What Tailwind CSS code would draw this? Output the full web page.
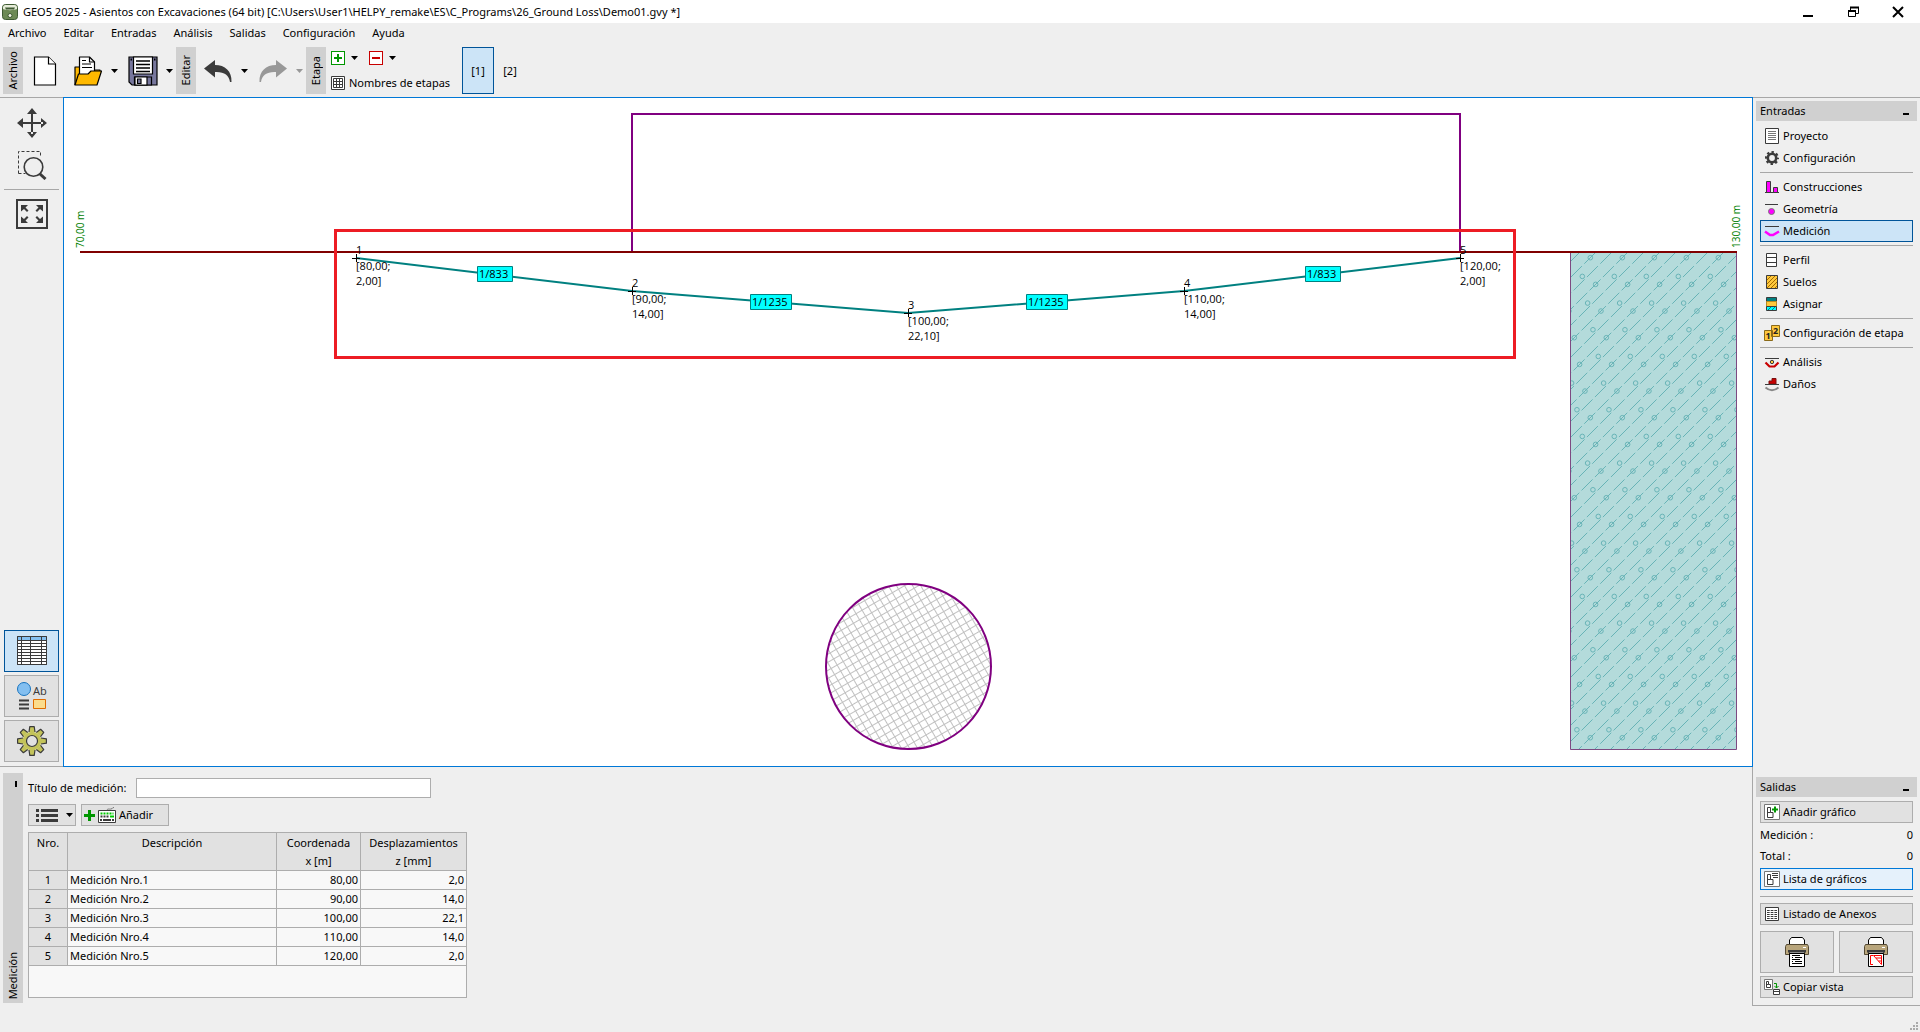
<!DOCTYPE html>
<html lang="es">
<head>
  <meta charset="UTF-8">
  <meta name="viewport" content="width=device-width, initial-scale=1.0">
  <title>GEO5 2025 - Asientos con Excavaciones</title>
  <!-- Tailwind CSS CDN -->
  <script src="https://cdn.jsdelivr.net/npm/@tailwindcss/browser@4"></script>
</head>
<body class="h-screen flex flex-col overflow-hidden bg-[#efefef] font-['Noto_Sans','Open_Sans',sans-serif] text-[11px] leading-4 text-black">

  <!-- Title bar -->
  <header class="flex h-[23px] shrink-0 items-center bg-white">
    <svg class="ml-0.5 mr-[5px] size-4" viewBox="0 0 16 16">
      <rect x="0.5" y="0.5" width="15" height="15" rx="3" fill="#6d8a55" stroke="#3f5a33"/>
      <path d="M1 3.500C1 2 2 1 3.500 1h9C14 1 15 2 15 3.500V5c-4 1.500-10 1.500-14 0z" fill="#e6ecd9"/>
      <path d="M3 3.500h10l-1 2H4z" fill="#3f5a33"/>
      <circle cx="8" cy="11.500" r="2" fill="#f4f7ea" stroke="#3f5a33"/>
    </svg>
    <h1 class="flex-1">GEO5 2025 - Asientos con Excavaciones (64 bit) [C:\Users\User1\HELPY_remake\ES\C_Programs\26_Ground Loss\Demo01.gvy *]</h1>
    <button class="flex h-full w-[45px] items-center justify-center" aria-label="Minimizar">
      <svg class="size-3" viewBox="0 0 12 12"><path d="M1 10h10" stroke="#000" stroke-width="2"/></svg>
    </button>
    <button class="flex h-full w-[45px] items-center justify-center" aria-label="Restaurar">
      <svg class="size-3" viewBox="0 0 12 12" fill="none" stroke="#000">
        <path d="M3.500 4V1.500h8v6H9"/><path d="M3 1.500h9M1 5h8" stroke-width="2"/><path d="M1.500 4.500h7v6h-7z"/>
      </svg>
    </button>
    <button class="flex h-full w-[45px] items-center justify-center" aria-label="Cerrar">
      <svg class="size-3" viewBox="0 0 12 12"><path d="M1 1l10 10M11 1L1 11" stroke="#000" stroke-width="2"/></svg>
    </button>
  </header>

  <!-- Menu -->
  <nav class="flex h-6 shrink-0 items-start gap-[17px] px-2 pt-0.5">
    <a href="#">Archivo</a>
    <a href="#">Editar</a>
    <a href="#">Entradas</a>
    <a href="#">Análisis</a>
    <a href="#">Salidas</a>
    <a href="#">Configuración</a>
    <a href="#">Ayuda</a>
  </nav>

  <!-- Toolbar -->
  <div class="flex h-[50px] shrink-0 items-start px-[3px]">
    <div class="flex h-[47px] w-5 items-center justify-center bg-[#d0d0d0]"><span class="rotate-180 [writing-mode:vertical-rl]">Archivo</span></div>
    <button class="ml-2 flex h-[47px] w-7 items-center justify-center" aria-label="Nuevo">
      <svg class="h-[30px] w-6" viewBox="0 0 24 30" fill="#fff" stroke="#000" stroke-width="1.200"><path d="M1.500 1h14l7 7v21h-21z"/><path d="M15.500 1v7h7"/></svg>
    </button>
    <button class="ml-[15px] flex h-[47px] items-center gap-[9px]" aria-label="Abrir">
      <svg class="h-[30px] w-7" viewBox="0 0 28 30" stroke="#000" stroke-width="1.200" stroke-linejoin="round">
        <path d="M1 29V11h8l2 3h15v5" fill="#ffb900"/>
        <path d="M5.500 21V1h10l5 5v15z" fill="#fff"/>
        <path d="M15.500 1v5h5M8 4.500h4M8 8h9M8 11.500h10" fill="none"/>
        <path d="M1 29L4.500 18H14l3-3h10.500L23 29z" fill="#ffb900"/>
      </svg>
      <svg class="h-1 w-[7px]" viewBox="0 0 7 4"><path d="M0 0h7L3.500 4z"/></svg>
    </button>
    <button class="ml-2.5 flex h-[47px] items-center gap-2" aria-label="Guardar">
      <svg class="size-[30px]" viewBox="0 0 30 30" stroke="#000" stroke-width="1.200">
        <path d="M1 1h28v28H4l-3-3z" fill="#77779d"/>
        <path d="M5.500 1h19v17h-19z" fill="#fff"/>
        <path d="M8 5h14M8 8.500h14M8 12h14M8 15.500h14" stroke-width="1.400"/>
        <path d="M6.500 21h17v8h-17z" fill="#77779d"/><path d="M7 21h12v8H7z" fill="#fff"/><path d="M9.500 23h3.500v4.500H9.500z" fill="#77779d"/>
        <path d="M2.500 3.500h1.500M26 3.500h1.500" stroke-width="2"/>
      </svg>
      <svg class="h-1 w-[7px]" viewBox="0 0 7 4"><path d="M0 0h7L3.500 4z"/></svg>
    </button>
    <div class="ml-[3px] flex h-[47px] w-5 items-center justify-center bg-[#d0d0d0]"><span class="rotate-180 [writing-mode:vertical-rl]">Editar</span></div>
    <button class="ml-2 flex h-[47px] items-center gap-[9px]" aria-label="Deshacer">
      <svg class="h-[22px] w-7" viewBox="0 0 28 22" fill="#3b3b3b"><path d="M0 8.500L11 0v5C21 5 28 11 27.500 22H26C25 15 20 11.500 11 12v5.500z"/></svg>
      <svg class="h-1 w-[7px]" viewBox="0 0 7 4"><path d="M0 0h7L3.500 4z"/></svg>
    </button>
    <button class="ml-[11px] flex h-[47px] items-center gap-[9px]" aria-label="Rehacer">
      <svg class="h-[22px] w-7" viewBox="0 0 28 22" fill="#989898"><path d="M28 8.500L17 0v5C7 5 0 11 .5 22H2C3 15 8 11.500 17 12v5.500z"/></svg>
      <svg class="h-1 w-[7px]" viewBox="0 0 7 4" fill="#989898"><path d="M0 0h7L3.500 4z"/></svg>
    </button>
    <div class="ml-[3px] flex h-[47px] w-5 items-center justify-center bg-[#d0d0d0]"><span class="rotate-180 [writing-mode:vertical-rl]">Etapa</span></div>
    <div class="ml-[5px] flex h-[47px] w-[120px] flex-col justify-between pt-1 pb-[3px]">
      <div class="flex gap-[11px]">
        <button class="flex items-center gap-1.5" aria-label="Añadir etapa">
          <svg class="size-3.5" viewBox="0 0 14 14" stroke="#009600"><rect x="0.500" y="0.500" width="13" height="13" fill="#fff"/><path d="M3 7h8M7 3v8" stroke-width="2"/></svg>
          <svg class="h-1 w-[7px]" viewBox="0 0 7 4"><path d="M0 0h7L3.500 4z"/></svg>
        </button>
        <button class="flex items-center gap-1.5" aria-label="Quitar etapa">
          <svg class="size-3.5" viewBox="0 0 14 14" stroke="#c80000"><rect x="0.500" y="0.500" width="13" height="13" fill="#fff"/><path d="M3 7h8" stroke-width="2"/></svg>
          <svg class="h-1 w-[7px]" viewBox="0 0 7 4"><path d="M0 0h7L3.500 4z"/></svg>
        </button>
      </div>
      <button class="flex items-center gap-1 whitespace-nowrap">
        <svg class="size-3.5" viewBox="0 0 14 14" fill="none" stroke="#3b3b3b"><path fill="#fff" d="M.5.500h13v13H.5z"/><path d="M2.500 2.500h9v9h-9zM2.500 5.500h9M2.500 8.500h9M5.500 2.500v9M8.500 2.500v9"/></svg>
        Nombres de etapas
      </button>
    </div>
    <button class="ml-[11px] h-[47px] w-8 border border-[#005499] bg-[#cce4f7]">[1]</button>
    <button class="h-[47px] w-8">[2]</button>
  </div>

  <div class="flex min-h-0 flex-1">
    <div class="flex min-w-0 flex-1 flex-col">
      <div class="flex min-h-0 flex-1">

        <!-- View tools -->
        <div class="flex w-[63px] shrink-0 flex-col items-center border-y border-[#a7a7a7] pt-1 pb-1">
          <button class="flex h-[38px] w-[55px] items-center justify-center pt-1" aria-label="Mover">
            <svg class="size-[30px]" viewBox="0 0 30 30" fill="#3b3b3b"><path d="M14 4h2v22h-2zM4 14h22v2H4zM15 0l5 6H10zM15 30l5-6H10zM0 15l6-5v10zM30 15l-6-5v10z"/></svg>
          </button>
          <button class="flex h-[42px] w-[55px] items-center justify-center pt-[7px]" aria-label="Ampliar región">
            <svg class="size-[30px]" viewBox="0 0 30 30" fill="none" stroke="#3b3b3b"><path d="M1.500 23.500v-22h22v6M1.500 23.500h7" stroke-dasharray="3 2"/><circle cx="16.500" cy="17" r="9.300" stroke-width="1.600"/><path d="M22.500 23.500l6 5.500" stroke-width="3"/></svg>
          </button>
          <hr class="mt-[7px] w-[55px] border-[#a7a7a7]">
          <button class="mt-[9px] flex w-[55px] items-center justify-center" aria-label="Ajustar vista">
            <svg class="h-[30px] w-8" viewBox="0 0 32 30" fill="#3b3b3b">
              <path d="M1 1h30v28H1z" fill="none" stroke="#3b3b3b" stroke-width="2"/>
              <path id="corner" d="M5 6h7l-2.500 2.500 3 3-1.500 1.500-3-3L5 12.500z"/>
              <use href="#corner" transform="translate(32 0) scale(-1 1)"/><use href="#corner" transform="translate(0 30) scale(1 -1)"/><use href="#corner" transform="translate(32 30) scale(-1 -1)"/>
            </svg>
          </button>
          <div class="mt-auto flex flex-col gap-[3px]">
            <button class="flex h-[42px] w-[55px] items-center justify-center border border-[#005499] bg-[#cce4f7]" aria-label="Tabla">
              <svg class="size-[30px]" viewBox="0 0 30 30" fill="none" stroke="#3b3b3b"><path d="M.5.500h29v28H.5z" fill="#fff"/><path d="M1 1h28v4H1z" fill="#83bff0" stroke="none"/><path d="M.5.500h29v28H.5zM.5 4.500h29M.5 7.500h29M.5 10.500h29M.5 13.500h29M.5 16.500h29M.5 19.500h29M.5 22.500h29M.5 25.500h29M4.500.5v28M13.500.5v28M24.500.5v28"/></svg>
            </button>
            <button class="flex h-[42px] w-[55px] items-center justify-center border border-[#adadad] bg-[#e1e1e1]" aria-label="Estilo de dibujo">
              <svg class="size-[30px]" viewBox="0 0 30 30"><circle cx="7" cy="8" r="6.500" fill="#83bff0" stroke="#1874bf"/><text x="16" y="14" font-size="11" fill="#3b3b3b">Ab</text><path d="M2 19.500h10M2 23.500h10M2 27.500h10" stroke="#3b3b3b" stroke-width="2"/><path d="M16.500 18.500h12v9h-12z" fill="#fbdc8c" stroke="#df6c00"/></svg>
            </button>
            <button class="flex h-[42px] w-[55px] items-center justify-center border border-[#adadad] bg-[#e1e1e1]" aria-label="Ajustes">
              <svg class="size-[30px]" viewBox="-15 -15 30 30">
                <g fill="#c3c35a" stroke="#3b3b3b" stroke-width="1.200" stroke-linejoin="round">
                  <g id="teeth"><path id="tooth" d="M-3-9l.8-5.400h4.400L3-9"/><use href="#tooth" transform="rotate(45)"/><use href="#tooth" transform="rotate(90)"/><use href="#tooth" transform="rotate(135)"/></g>
                  <use href="#teeth" transform="rotate(180)"/>
                </g>
                <circle r="9.300" fill="#c3c35a"/><circle r="5.500" fill="#e1e1e1" stroke="#3b3b3b" stroke-width="1.200"/>
              </svg>
            </button>
          </div>
        </div>

        <!-- Drawing -->
        <main class="relative z-10 min-w-0 flex-1 border border-[#0078d7] bg-white font-['Open_Sans',sans-serif]">
          <svg class="block size-full" viewBox="64 98 1688 668">
            <defs>
              <pattern id="hatch" width="7" height="7" patternUnits="userSpaceOnUse" patternTransform="rotate(-30)"><path d="M0 .5h7M.5 0v7" stroke="#c0c0c0"/></pattern>
              <clipPath id="soilClip"><path d="M1571 253h165v496h-165z"/></clipPath>
              <g id="grain" fill="none" stroke="#68b4b7">
                <circle r="2.300"/><circle cx="-8" cy="18.700" r="2.300"/>
                <path d="M-6 6L5-5M7.300-7.300l11-11M10 6L21-5M23.300-7.300l11-11"/>
              </g>
            </defs>

            <path d="M1570.500 252v497.500h166V252" fill="#b4dbdb" stroke="#7d4a82"/>
            <g id="soil" clip-path="url(#soilClip)"></g>

            <path d="M632 252V114h828v138" fill="none" stroke="#800080" stroke-width="2"/>
            <circle cx="908.500" cy="666.500" r="82.500" fill="url(#hatch)" stroke="#800080" stroke-width="2"/>
            <path d="M80 252h1657" stroke="#800000" stroke-width="2"/>
            <path d="M356 258l276 33 276 22 276-22 276-33" fill="none" stroke="#008080" stroke-width="2"/>
            <path d="M352 258.500h8M356.500 254v8M628 291.500h8M632.500 287v8M904 313.500h8M908.500 309v8M1180 291.500h8M1184.500 287v8M1456 258.500h8M1460.500 254v8" stroke="#000"/>

            <g fill="#00ffff" stroke="#008080">
              <path d="M477.500 266.500h35v15h-35zM750.500 294.500h41v15h-41zM1026.500 294.500h41v15h-41zM1305.500 266.500h35v15h-35z"/>
            </g>
            <g font-size="11">
              <text x="479" y="278">1/833</text><text x="752" y="306">1/1235</text>
              <text x="1028" y="306">1/1235</text><text x="1307" y="278">1/833</text>
              <text x="356" y="254">1</text><text x="356" y="270">[80,00;</text><text x="356" y="285">2,00]</text>
              <text x="632" y="287">2</text><text x="632" y="303">[90,00;</text><text x="632" y="318">14,00]</text>
              <text x="908" y="309">3</text><text x="908" y="325">[100,00;</text><text x="908" y="340">22,10]</text>
              <text x="1184" y="287">4</text><text x="1184" y="303">[110,00;</text><text x="1184" y="318">14,00]</text>
              <text x="1460" y="254">5</text><text x="1460" y="270">[120,00;</text><text x="1460" y="285">2,00]</text>
            </g>
            <g font-size="10" fill="#008000">
              <text transform="translate(84 248) rotate(-90)">70,00 m</text>
              <text transform="translate(1740 248) rotate(-90)">130,00 m</text>
            </g>
            <path d="M335.500 230.500h1179v127h-1179z" fill="none" stroke="#ed1c24" stroke-width="3"/>
          </svg>
        </main>
      </div>

      <!-- Input panel -->
      <section class="flex h-[265px] shrink-0 items-start gap-[5px] pl-[3px] pt-1.5">
        <div class="flex h-[230px] w-5 flex-col items-center justify-between bg-[#d0d0d0] pt-2 pb-1">
          <button class="ml-1.5 h-1.5 w-0.5 bg-black" aria-label="Contraer"></button>
          <span class="rotate-180 [writing-mode:vertical-rl]">Medición</span>
        </div>
        <div class="pt-[5px]">
          <div class="flex items-center gap-1.5">
            <label for="titulo" class="w-[102px] whitespace-nowrap">Título de medición:</label>
            <input id="titulo" type="text" class="h-5 w-[295px] border border-[#adadad] bg-white px-1 outline-none">
          </div>
          <div class="mt-1.5 flex gap-[5px]">
            <button class="flex h-[22px] w-12 items-center justify-between border border-[#adadad] bg-[#e1e1e1] pl-[7px] pr-0.5" aria-label="Lista">
              <svg class="h-[13px] w-[22px]" viewBox="0 0 22 13"><path d="M0 1.500h3M5 1.500h17M0 6.500h3M5 6.500h17M0 11.500h3M5 11.500h17" stroke="#3b3b3b" stroke-width="3"/></svg>
              <svg class="h-1 w-[7px]" viewBox="0 0 7 4"><path d="M0 0h7L3.500 4z"/></svg>
            </button>
            <button class="flex h-[22px] w-[88px] items-center gap-[3px] border border-[#adadad] bg-[#e1e1e1] pl-0.5">
              <svg class="size-[11px]" viewBox="0 0 11 11"><path d="M0 5.500h11M5.500 0v11" stroke="#009600" stroke-width="3"/></svg>
              <svg class="h-4 w-[18px]" viewBox="0 0 18 16" fill="none"><path d="M9 4c0-3 2-1.500 4-2s1-1.500 3-1.500" stroke="#777"/><path d="M.5 3.500h17v12H.5z" fill="#fff" stroke="#3b3b3b"/><path d="M2.500 6.500h13" stroke="#00c800" stroke-width="2" stroke-dasharray="2 1"/><path d="M2.500 9.500h9" stroke="#3b3b3b" stroke-width="2" stroke-dasharray="2 1"/><path d="M12 9.500h4" stroke="#00c800" stroke-width="2"/><path d="M2 13h2M5 13h8M14 13h2" stroke="#3b3b3b" stroke-width="2"/></svg>
              Añadir
            </button>
          </div>
          <div class="mt-1.5 h-[166px] w-[439px] border border-[#adadad] bg-[#f8f8f8]">
            <table class="w-full table-fixed border-separate border-spacing-0">
              <colgroup><col class="w-[39px]"><col><col class="w-[84px]"><col class="w-[105px]"></colgroup>
              <thead class="bg-[#e1e1e1] leading-[18px]">
                <tr class="align-top *:border-b *:border-r *:border-[#adadad] *:p-0 *:pt-px *:font-normal *:last:border-r-0">
                  <th>Nro.</th><th>Descripción</th><th>Coordenada<br>x [m]</th><th>Desplazamientos<br>z [mm]</th>
                </tr>
              </thead>
              <tbody class="leading-[18px] *:*:border-b *:*:border-r *:*:border-[#adadad] *:*:p-0 *:*:px-0.5 *:*:last:border-r-0">
                <tr><td class="bg-[#e1e1e1] text-center">1</td><td>Medición Nro.1</td><td class="text-right">80,00</td><td class="text-right">2,0</td></tr>
                <tr><td class="bg-[#e1e1e1] text-center">2</td><td>Medición Nro.2</td><td class="text-right">90,00</td><td class="text-right">14,0</td></tr>
                <tr><td class="bg-[#e1e1e1] text-center">3</td><td>Medición Nro.3</td><td class="text-right">100,00</td><td class="text-right">22,1</td></tr>
                <tr><td class="bg-[#e1e1e1] text-center">4</td><td>Medición Nro.4</td><td class="text-right">110,00</td><td class="text-right">14,0</td></tr>
                <tr><td class="bg-[#e1e1e1] text-center">5</td><td>Medición Nro.5</td><td class="text-right">120,00</td><td class="text-right">2,0</td></tr>
              </tbody>
            </table>
          </div>
        </div>
      </section>
    </div>

    <!-- Right panel -->
    <aside class="-ml-px flex w-[168px] shrink-0 flex-col">
      <div class="flex flex-1 flex-col justify-between border-y border-l border-[#a7a7a7] px-[3px] pt-[3px] pb-[7px]">
        <div>
          <h2 class="flex h-5 items-center justify-between bg-[#d0d0d0] pl-1 pr-2">Entradas <span class="mt-1.5 h-0.5 w-1.5 bg-black"></span></h2>
          <nav class="mt-1 px-1 whitespace-nowrap *:[a]:flex *:[a]:h-[22px] *:[a]:items-center *:[a]:gap-[3px] *:[a]:border *:[a]:pl-[3px] *:[hr]:my-[3px] *:[hr]:border-[#a7a7a7]">
            <a href="#" class="border-transparent"><svg class="size-4" viewBox="0 0 16 16" fill="none" stroke="#3b3b3b"><path d="M1.500.5h13v15h-13z" fill="#fff"/><path d="M4 3.500h8M4 5.500h8M4 7.500h8M4 9.500h8M4 11.500h8" stroke="#777"/></svg>Proyecto</a>
            <a href="#" class="border-transparent"><svg class="size-4" viewBox="0 0 16 16" fill="none" stroke="#3b3b3b"><circle cx="8" cy="8" r="4.200" stroke-width="2.600"/><circle cx="8" cy="8" r="6" stroke-width="2" stroke-dasharray="2.400 2.312" stroke-dashoffset="1.200"/></svg>Configuración</a>
            <hr>
            <a href="#" class="border-transparent"><svg class="size-4" viewBox="0 0 16 16" fill="#f0f" stroke="#3b3b3b"><path d="M2.500 2.500h4v11h-4zM9.500 8.500h4v5h-4z"/><path d="M1 13.500h14"/></svg>Construcciones</a>
            <a href="#" class="border-transparent"><svg class="size-4" viewBox="0 0 16 16" stroke="#3b3b3b"><path d="M1 3.500h13"/><circle cx="7.500" cy="10.500" r="3" fill="#f0f" stroke="#777"/></svg>Geometría</a>
            <a href="#" class="border-[#005499] bg-[#cce4f7]"><svg class="size-4" viewBox="0 0 16 16" fill="none" stroke="#3b3b3b"><path d="M1 3.500h14"/><path d="M1 8.500l5 3.500h3l6-3.500" stroke="#f0f" stroke-width="2.500"/></svg>Medición</a>
            <hr>
            <a href="#" class="border-transparent"><svg class="size-4" viewBox="0 0 16 16" fill="#fff" stroke="#3b3b3b"><path d="M2.500 1.500h10v13h-10zM2.500 5.500h10M2.500 10.500h10"/></svg>Perfil</a>
            <a href="#" class="border-transparent"><svg class="size-4" viewBox="0 0 16 16" fill="#ffc83c" stroke="#3b3b3b"><path d="M2.500 1.500h11v13h-11z"/><path d="M3 6l4-4M3 10l8-8M3 14L13 4M7 14l6-6M11 14l2-2" stroke="#a36b00"/></svg>Suelos</a>
            <a href="#" class="border-transparent"><svg class="size-4" viewBox="0 0 16 16" stroke="#3b3b3b"><path d="M2.500 1.500h10v4h-10z" fill="#007f7f"/><path d="M2.500 5.500h10v5h-10z" fill="#ffc83c" stroke="#b98a20"/><path d="M2.500 10.500h10v4h-10z" fill="#0ff"/><path d="M4 14l3-3M8 14l3-3" stroke="#007f7f"/></svg>Asignar</a>
            <hr>
            <a href="#" class="border-transparent"><svg class="size-4" viewBox="0 0 16 16" fill="#ffc83c" stroke="#8a6a1a"><path d="M.5 5.500h8v10h-8zM7.500.5h8v11h-8z"/><g fill="#222" stroke="none" font-size="9" font-weight="bold" text-anchor="middle"><text x="4" y="14">1</text><text x="11.500" y="9">2</text></g></svg>Configuración de etapa</a>
            <hr>
            <a href="#" class="border-transparent"><svg class="size-4" viewBox="0 0 16 16" fill="none" stroke="#3b3b3b"><path d="M1 4.500h14"/><path d="M1.500 8.500l4 4h5l4-4" stroke="#c80000" stroke-width="2.200"/><circle cx="8" cy="8" r="1.700" fill="#ffc83c"/></svg>Análisis</a>
            <a href="#" class="border-transparent"><svg class="size-4" viewBox="0 0 16 16" fill="none" stroke="#3b3b3b"><path d="M5 5h3V2.500h4V8H5z" fill="#c80000" stroke="#7a1010"/><path d="M1 8.500h14"/><path d="M1.500 11.500c4 3.500 9 3.500 13 0" stroke="#888" stroke-width="2"/></svg>Daños</a>
          </nav>
        </div>

        <!-- Outputs -->
        <div>
          <h2 class="flex h-5 items-center justify-between bg-[#d0d0d0] pl-1 pr-2">Salidas <span class="mt-1.5 h-0.5 w-1.5 bg-black"></span></h2>
          <div class="mt-1 px-1">
            <button class="flex h-[22px] w-full items-center gap-[3px] border border-[#adadad] bg-[#e1e1e1] pl-[3px]"><svg class="size-4" viewBox="0 0 16 16" fill="none" stroke="#3b3b3b"><path d="M.5.500h15v15H.5z" fill="#fff" stroke="#777"/><path d="M3.500 13.500v-10h3v5h2.500v5zM3.500 8.500h3"/><path d="M8 5.500h6M11 2.500v6" stroke="#009600" stroke-width="2"/></svg>Añadir gráfico</button>
            <p class="mt-px flex h-[21px] items-center justify-between">Medición : <span>0</span></p>
            <p class="flex h-[21px] items-center justify-between">Total : <span>0</span></p>
            <button class="mt-0.5 flex h-[22px] w-full items-center gap-[3px] border border-[#0078d7] bg-[#e5f1fb] pl-[3px]"><svg class="size-4" viewBox="0 0 16 16" fill="none" stroke="#3b3b3b"><path d="M.5.500h15v15H.5z" fill="#fff" stroke="#777"/><path d="M3.500 13.500v-10h3v5h2.500v5zM3.500 8.500h3M8 2.500h6M8 4.500h6M9 6.500h5"/></svg>Lista de gráficos</button>
            <hr class="my-1.5 border-[#a7a7a7]">
            <button class="flex h-[22px] w-full items-center gap-[3px] border border-[#adadad] bg-[#e1e1e1] pl-[3px]"><svg class="size-4" viewBox="0 0 16 16" fill="none" stroke="#3b3b3b"><path d="M1.500 1.500h13v13h-13z" fill="#fff"/><path d="M3 4.500h10M3 6.500h10M3 8.500h10M3 10.500h10M3 12.500h10" stroke-dasharray="2.700 1"/></svg>Listado de Anexos</button>
            <div class="mt-1.5 grid grid-cols-2 gap-[5px]">
              <button class="flex h-[42px] items-center justify-center border border-[#adadad] bg-[#e1e1e1]" aria-label="Imprimir">
                <svg class="h-[30px] w-6" viewBox="0 0 24 30" stroke="#000"><path d="M4.500 8V3l2-2.500h11l2 2.500v5z" fill="#fff"/><path d="M1.500 7.500h21l1 2v8h-4v-4h-15v4h-4v-8z" fill="#b9a67c" stroke="#554a33"/><path d="M3 13h18v2.500H3z" fill="#3b3b3b" stroke="none"/><path d="M4.500 16.500h15v13h-15z" fill="#fff"/><path d="M7 18.500h8M7 20.500h1M10 20.500h7M7 22.500h8M7 24.500h1M10 24.500h7M7 26.500h10" fill="none"/><path d="M18 10.500h3" stroke="#fff"/></svg>
              </button>
              <button class="flex h-[42px] items-center justify-center border border-[#adadad] bg-[#e1e1e1]" aria-label="Imprimir vista">
                <svg class="h-[30px] w-6" viewBox="0 0 24 30" stroke="#000"><path d="M4.500 8V3l2-2.500h11l2 2.500v5z" fill="#fff"/><path d="M1.500 7.500h21l1 2v8h-4v-4h-15v4h-4v-8z" fill="#b9a67c" stroke="#554a33"/><path d="M3 13h18v2.500H3z" fill="#3b3b3b" stroke="none"/><path d="M4.500 16.500h15v13h-15z" fill="#fff"/><path d="M9 18.500H6.500v9H9M9.500 18.500h8v9M9.500 18.500l8 9M12 21h5M14.500 24h3" fill="none" stroke="#f00"/><path d="M18 10.500h3" stroke="#fff"/></svg>
              </button>
            </div>
            <button class="mt-[3px] flex h-[22px] w-full items-center gap-[3px] border border-[#adadad] bg-[#e1e1e1] pl-[3px]"><svg class="size-4" viewBox="0 0 16 16" fill="none" stroke="#3b3b3b"><path d="M.5.500h8v10h-8z" fill="#fff" stroke="#777"/><path d="M2.500 8.500v-6h2v3h2v3zM2.500 5.500h2"/><path d="M10 4.500h2.500V9M10.500 7l2 2 2-2" stroke="#009600"/><path d="M9.500 10.500h6v5h-6zM9.500 12.500h6" fill="#fff"/></svg>Copiar vista</button>
          </div>
        </div>
      </div>
      <div class="flex h-[26px] items-end justify-end p-0.5">
        <svg class="size-2" viewBox="0 0 8 8" fill="#aaa"><path d="M6 0h2v2H6zM3 3h2v2H3zM6 3h2v2H6zM0 6h2v2H0zM3 6h2v2H3zM6 6h2v2H6z"/></svg>
      </div>
    </aside>
  </div>

  <script>
    // Fill the soil profile with its hatch
    const soil = document.getElementById('soil');
    for (let row = -1; row < 20; row++) {
      for (let col = -5; col < 7; col++) {
        const use = document.createElementNS('http://www.w3.org/2000/svg', 'use');
        use.setAttribute('href', '#grain');
        use.setAttribute('x', 1590.3 + col * 32 + row * 5.33);
        use.setAttribute('y', 257.7 + row * 26.67);
        soil.appendChild(use);
      }
    }
  </script>
</body>
</html>
